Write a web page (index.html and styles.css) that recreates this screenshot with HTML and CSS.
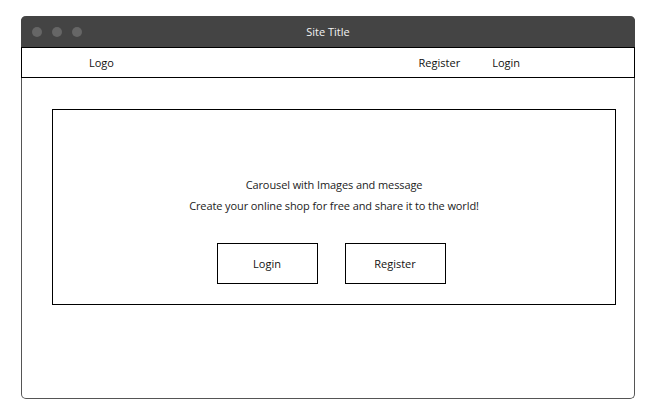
FILE: index.html
```html
<!DOCTYPE html>
<html>
<head>
<meta charset="utf-8">
<link rel="stylesheet" href="styles.css">
</head>
<body>
<div class="window">
  <div class="titlebar">
    <div class="dots"><span class="dot"></span><span class="dot"></span><span class="dot"></span></div>
    <div class="title">Site Title</div>
  </div>
  <div class="nav">
    <span class="logo">Logo</span>
    <div class="links"><span>Register</span><span>Login</span></div>
  </div>
  <div class="content">
    <div class="carousel">
      <p class="msg">Carousel with Images and message</p>
      <p class="msg">Create your online shop for free and share it to the world!</p>
      <div class="buttons">
        <div class="btn">Login</div>
        <div class="btn">Register</div>
      </div>
    </div>
  </div>
</div>
</body>
</html>
```
FILE: styles.css
```css
html, body { margin: 0; padding: 0; background: #fff; }
body {
  padding: 16px 0 0 21px;
  font-family: "Open Sans", "Noto Sans", sans-serif;
  font-size: 11px;
  color: #111;
}
.window {
  width: 614px;
  height: 383px;
  box-sizing: border-box;
  border-left: 1px solid #555;
  border-right: 1px solid #555;
  border-bottom: 1px solid #555;
  border-radius: 5px 5px 5px 5px;
  display: flex;
  flex-direction: column;
}
.titlebar {
  height: 31px;
  background: #444;
  border-radius: 5px 5px 0 0;
  margin: 0 -1px;
  display: flex;
  align-items: center;
  position: relative;
}
.dots { display: flex; gap: 10px; padding-left: 11px; }
.dot { width: 10px; height: 10px; border-radius: 50%; background: #666; }
.title {
  position: absolute;
  left: 0; right: 0; top: 0; bottom: 0;
  display: flex; align-items: center; justify-content: center;
  color: #f2f2f2;
  font-size: 11px;
}
.nav {
  height: 31px;
  box-sizing: border-box;
  border: 1px solid #000;
  margin: 0 -1px 0 -1px;
  display: flex;
  align-items: center;
  padding-left: 67px;
}
.logo { flex: 0 0 auto; }
.links { margin-left: auto; margin-right: 114px; display: flex; gap: 32px; }
.content { padding: 31px 0 0 30px; }
.carousel {
  width: 564px;
  height: 196px;
  box-sizing: border-box;
  border: 1px solid #000;
  display: flex;
  flex-direction: column;
  align-items: center;
  padding-top: 67px;
  color: #222;
}
.msg { margin: 0 0 6px 0; line-height: 15px; letter-spacing: -0.1px; }
.buttons { display: flex; gap: 27px; margin-top: 24px; margin-right: 6px; }
.btn {
  width: 101px; height: 41px;
  box-sizing: border-box;
  border: 1px solid #000;
  display: flex; align-items: center; justify-content: center;
  color: #111;
}
```
